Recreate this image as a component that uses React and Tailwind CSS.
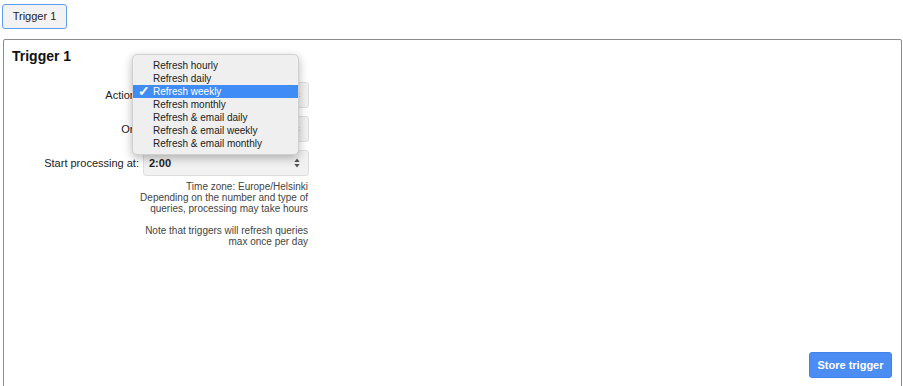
import React from 'react';

const OPTIONS = [
  'Refresh hourly',
  'Refresh daily',
  'Refresh weekly',
  'Refresh monthly',
  'Refresh & email daily',
  'Refresh & email weekly',
  'Refresh & email monthly',
];

function Arrows() {
  return (
    <svg width="6" height="10" viewBox="0 0 6 10" className="shrink-0">
      <path d="M3 0.5 L5.6 4 L0.4 4 Z" fill="#555" />
      <path d="M3 9.5 L5.6 6 L0.4 6 Z" fill="#555" />
    </svg>
  );
}

function Select({ value }) {
  return (
    <div className="w-[166px] h-[26px] flex items-center justify-between pl-[5px] pr-[8px] bg-[#f1f1f1] border border-[#dedede] rounded-[3px] text-[11px] font-bold text-[#222]">
      <span>{value}</span>
      <Arrows />
    </div>
  );
}

function Row({ label, children }) {
  return (
    <div className="flex items-center gap-[4px]">
      <div className="w-[127px] text-right text-[11px] text-[#222]">{label}</div>
      {children}
    </div>
  );
}

export default function App() {
  return (
    <div className="w-[903px] h-[386px] overflow-hidden bg-white pt-[3px] font-['Liberation_Sans',Arial,sans-serif]">
      <div className="pl-[2px]">
        <button className="w-[65px] h-[25px] bg-[#f2f2f2] border border-[#5d9df2] rounded-[3px] text-[11px] font-medium text-[#222]">
          Trigger 1
        </button>
      </div>

      <div className="mt-[10px] ml-[3px] mr-[1px] h-[360px] border border-[#8c8c8c] rounded-[2px] flex flex-col pt-[8px] pl-[8px]">
        <h2 className="text-[14px] leading-[16px] font-bold text-[#111]">Trigger 1</h2>

        <div className="mt-[18px] flex flex-col gap-[8px]">
          <div className="relative">
            <Row label="Action:">
              <Select value="Refresh weekly" />
            </Row>
            {/* open popup over the action select */}
            <div className="absolute left-[120px] top-[-28px] w-[167px] py-[4px] bg-[#efefef] border border-[#d0d0d0] rounded-[5px] shadow-[0_3px_10px_rgba(0,0,0,0.28)] text-[10px] leading-[13px] text-[#222]">
              {OPTIONS.map((o, i) => (
                <div
                  key={o}
                  className={
                    i === 2
                      ? 'relative h-[13px] pl-[20px] bg-[#3f8cf6] text-white'
                      : 'relative h-[13px] pl-[20px]'
                  }
                >
                  {i === 2 && (
                    <span className="absolute left-[5px] top-0 text-[14px] font-bold leading-[13px]">✓</span>
                  )}
                  {o}
                </div>
              ))}
            </div>
          </div>
          <Row label="On:">
            <Select value="Monday" />
          </Row>
          <Row label="Start processing at:">
            <Select value="2:00" />
          </Row>
        </div>

        <div className="w-[296px] mt-[5px] text-right text-[10px] leading-[11px] text-[#444]">
          <p>Time zone: Europe/Helsinki</p>
          <p>Depending on the number and type of</p>
          <p>queries, processing may take hours</p>
          <p className="mt-[11px]">Note that triggers will refresh queries</p>
          <p>max once per day</p>
        </div>

        <div className="mt-auto flex justify-end pr-[9px] pb-[20px]">
          <button className="w-[83px] h-[26px] bg-[#4b8df2] border border-[#3f82ea] rounded-[3px] text-[11px] font-bold text-white">
            Store trigger
          </button>
        </div>
      </div>
    </div>
  );
}
